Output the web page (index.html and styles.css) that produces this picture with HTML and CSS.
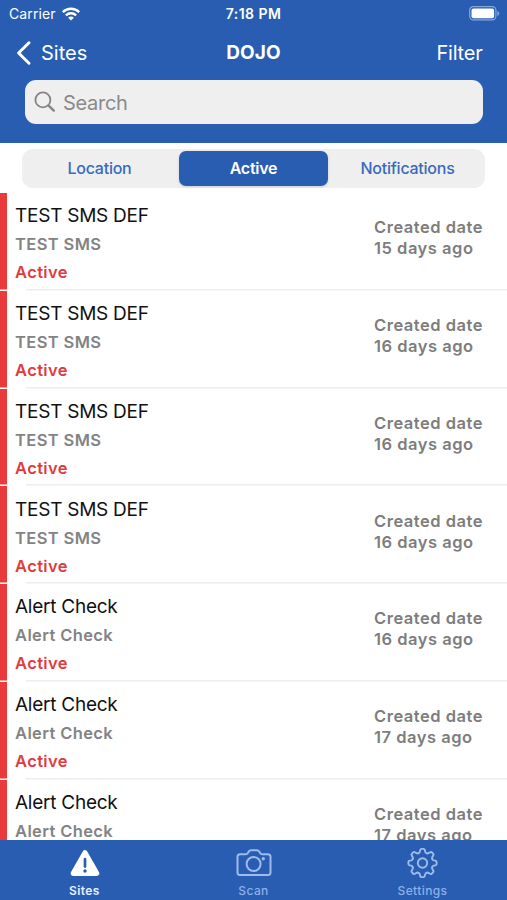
FILE: index.html
```html
<!DOCTYPE html>
<html lang="en">
<head>
<meta charset="utf-8">
<title>DOJO</title>
<link rel="stylesheet" href="styles.css">
</head>
<body>
<div class="app">
  <header class="header">
    <div class="status">
      <div class="carrier"><span>Carrier</span>
        <svg width="18" height="14" viewBox="0 0 18 14" fill="none" stroke="#fff" stroke-width="2.4"><path d="M.8 5.1C5.3.6 12.7.6 17.2 5.1M3.9 8.3c2.9-2.8 7.3-2.8 10.2 0"/><path d="M9 13.6 6.1 10.7c1.7-1.5 4.1-1.5 5.8 0z" fill="#fff" stroke="none"/></svg>
      </div>
      <span class="time">7:18 PM</span>
      <svg class="battery" width="31" height="15" viewBox="0 0 31 15"><rect x=".7" y=".7" width="26.2" height="13.2" rx="3.6" fill="none" stroke="#86a7dc" stroke-width="1.2"/><rect x="2.5" y="2.4" width="22.6" height="9.8" rx="2" fill="#fff"/><path d="M28.3 4.8q1.9 1 1.9 2.6t-1.9 2.6z" fill="#86a7dc"/></svg>
    </div>
    <nav class="nav">
      <a class="back"><svg width="16" height="26" viewBox="0 0 16 26" fill="none" stroke="#fff" stroke-width="3" stroke-linecap="round" stroke-linejoin="round"><path d="M13 2.8 2.6 13 13 23.2"/></svg><span>Sites</span></a>
      <h1 class="title">DOJO</h1>
      <a class="filter">Filter</a>
    </nav>
    <div class="search">
      <svg width="22" height="22" viewBox="0 0 22 22" fill="none" stroke="#858585" stroke-linecap="round"><circle cx="8.9" cy="8.9" r="7.5" stroke-width="1.8"/><path d="m14.6 14.6 5.2 5" stroke-width="2.4"/></svg>
      <span>Search</span>
    </div>
  </header>
  <main class="content">
    <div class="segments">
      <span class="segment">Location</span>
      <span class="segment selected">Active</span>
      <span class="segment">Notifications</span>
    </div>
    <ul class="list">
      <li class="row"><div class="info"><p class="name">TEST SMS DEF</p><p class="sub">TEST SMS</p><p class="state">Active</p></div><div class="date">Created date<br>15 days ago</div></li>
      <li class="row"><div class="info"><p class="name">TEST SMS DEF</p><p class="sub">TEST SMS</p><p class="state">Active</p></div><div class="date">Created date<br>16 days ago</div></li>
      <li class="row"><div class="info"><p class="name">TEST SMS DEF</p><p class="sub">TEST SMS</p><p class="state">Active</p></div><div class="date">Created date<br>16 days ago</div></li>
      <li class="row"><div class="info"><p class="name">TEST SMS DEF</p><p class="sub">TEST SMS</p><p class="state">Active</p></div><div class="date">Created date<br>16 days ago</div></li>
      <li class="row"><div class="info"><p class="name">Alert Check</p><p class="sub">Alert Check</p><p class="state">Active</p></div><div class="date">Created date<br>16 days ago</div></li>
      <li class="row"><div class="info"><p class="name">Alert Check</p><p class="sub">Alert Check</p><p class="state">Active</p></div><div class="date">Created date<br>17 days ago</div></li>
      <li class="row"><div class="info"><p class="name">Alert Check</p><p class="sub">Alert Check</p></div><div class="date">Created date<br>17 days ago</div></li>
    </ul>
  </main>
  <footer class="tabs">
    <a class="tab current">
      <svg width="36" height="32" viewBox="0 0 36 32"><path d="M18 5.800 29.700 26.300H6.300z" fill="#fff" stroke="#fff" stroke-width="5.200" stroke-linejoin="round"/><path d="M18 12v7.600" stroke="#285db2" stroke-width="2.700" stroke-linecap="round"/><circle cx="18" cy="24" r="1.700" fill="#285db2"/></svg>
      <span>Sites</span>
    </a>
    <a class="tab">
      <svg width="36" height="32" viewBox="0 0 36 32" fill="none" stroke="#9dbbeb" stroke-width="2"><path d="M4 7.200h6q1.100 0 1.700-1l1.200-1.800q.8-1.100 2-1.100h6.200q1.200 0 2 1.100l1.200 1.800q.6 1 1.700 1h6q2.500 0 2.500 2.500v15.800q0 2.500-2.500 2.500H4q-2.500 0-2.500-2.500V9.700Q1.500 7.200 4 7.200z"/><circle cx="17.600" cy="17" r="7"/><circle cx="27.300" cy="11.800" r="1.700" fill="#9dbbeb" stroke="none"/></svg>
      <span>Scan</span>
    </a>
    <a class="tab">
      <svg width="36" height="32" viewBox="-17.500 -16 36 32" fill="none" stroke="#9dbbeb" stroke-width="1.900" stroke-linecap="round">
        <defs><path id="tooth" d="M-4.060-9.800C-3.200-10.100-2.900-10.500-2.700-11.200L-2.300-12.900Q-2-14.100-1.100-14.100H1.100Q2-14.100 2.300-12.900L2.700-11.200C2.900-10.500 3.200-10.100 4.060-9.800"/></defs>
        <use href="#tooth"/><use href="#tooth" transform="rotate(45)"/><use href="#tooth" transform="rotate(90)"/><use href="#tooth" transform="rotate(135)"/><use href="#tooth" transform="rotate(180)"/><use href="#tooth" transform="rotate(225)"/><use href="#tooth" transform="rotate(270)"/><use href="#tooth" transform="rotate(315)"/><circle r="4.700"/>
      </svg>
      <span>Settings</span>
    </a>
  </footer>
</div>
</body>
</html>
```

FILE: styles.css
```css
* { box-sizing: border-box; margin: 0; padding: 0; }
body { background: #fff; font-family: Inter, "Liberation Sans", sans-serif; }
svg { display: block; flex: none; }
.app { display: flex; flex-direction: column; width: 507px; height: 900px; overflow: hidden; }
.header { flex: none; height: 143px; background: #285db2; color: #fff; }
.status { display: grid; grid-template-columns: 1fr auto 1fr; align-items: center; height: 27px; padding: 0 8px; font-size: 14px; }
.carrier { display: flex; align-items: center; gap: 6px; padding-left: 1px; letter-spacing: .1px; }
.time { font-size: 14px; font-weight: 600; letter-spacing: .45px; }
.battery { justify-self: end; margin-right: -1px; }
.nav { display: grid; grid-template-columns: 1fr auto 1fr; align-items: center; height: 53px; padding: 0 24.500px 2px; font-size: 20px; }
.back { display: flex; align-items: center; gap: 9px; margin-left: -8.500px; }
.title { font-size: 19px; font-weight: 700; letter-spacing: .1px; }
.filter { justify-self: end; letter-spacing: -.2px; }
.search { display: flex; align-items: center; gap: 7px; height: 44px; margin: 0 24px 0 25px; padding-left: 9px; border-radius: 11px; background: #efefef; color: #8a8a8a; font-size: 20px; letter-spacing: -.3px; }
.search span { padding-top: 1px; }
.content { flex: 1; min-height: 0; overflow: hidden; padding-top: 6px; }
.segments { display: grid; grid-template-columns: repeat(3, 1fr); height: 39px; margin: 0 22px 5px; padding: 2px; border-radius: 11px; background: #efefef; }
.segment { display: flex; align-items: center; justify-content: center; padding-bottom: 1px; border-radius: 7px; color: #396abd; font-size: 16px; font-weight: 500; letter-spacing: -.25px; }
.segment:first-child { padding-right: 2px; }
.segment:last-child { padding-left: 2px; }
.selected { margin: 0 2px; background: #285db2; color: #fff; font-weight: 600; box-shadow: 0 1px 3px #0002; }
.list { list-style: none; }
.row { display: flex; justify-content: space-between; height: 97.750px; padding: 0 24px 0 15px; background: linear-gradient(#e93a3c, #e93a3c) 0 0 / 7px calc(100% - 1.500px) no-repeat, linear-gradient(#ededed, #ededed) 26px calc(100% - .500px) / 481px 1.500px no-repeat; }
.info { padding-top: 9.300px; }
.name { color: #111; font-size: 19px; line-height: 28px; letter-spacing: -.25px; }
.sub, .state { font-size: 16.500px; font-weight: 600; line-height: 28px; letter-spacing: .38px; }
.sub { color: #838383; }
.state { color: #e33b3d; }
.date { width: 109px; padding-top: 24.300px; white-space: nowrap; color: #7d7d7d; font-size: 16.500px; font-weight: 600; line-height: 21px; letter-spacing: .52px; }
.tabs { display: grid; grid-template-columns: repeat(3, 1fr); flex: none; height: 60px; background: #285db2; }
.tab { display: flex; flex-direction: column; align-items: center; padding-top: 7px; color: #8fafe5; font-size: 12px; font-weight: 500; line-height: 16px; letter-spacing: .4px; }
.tab span { margin-top: 4px; }
.current { color: #e9f0ff; font-weight: 600; }
```
